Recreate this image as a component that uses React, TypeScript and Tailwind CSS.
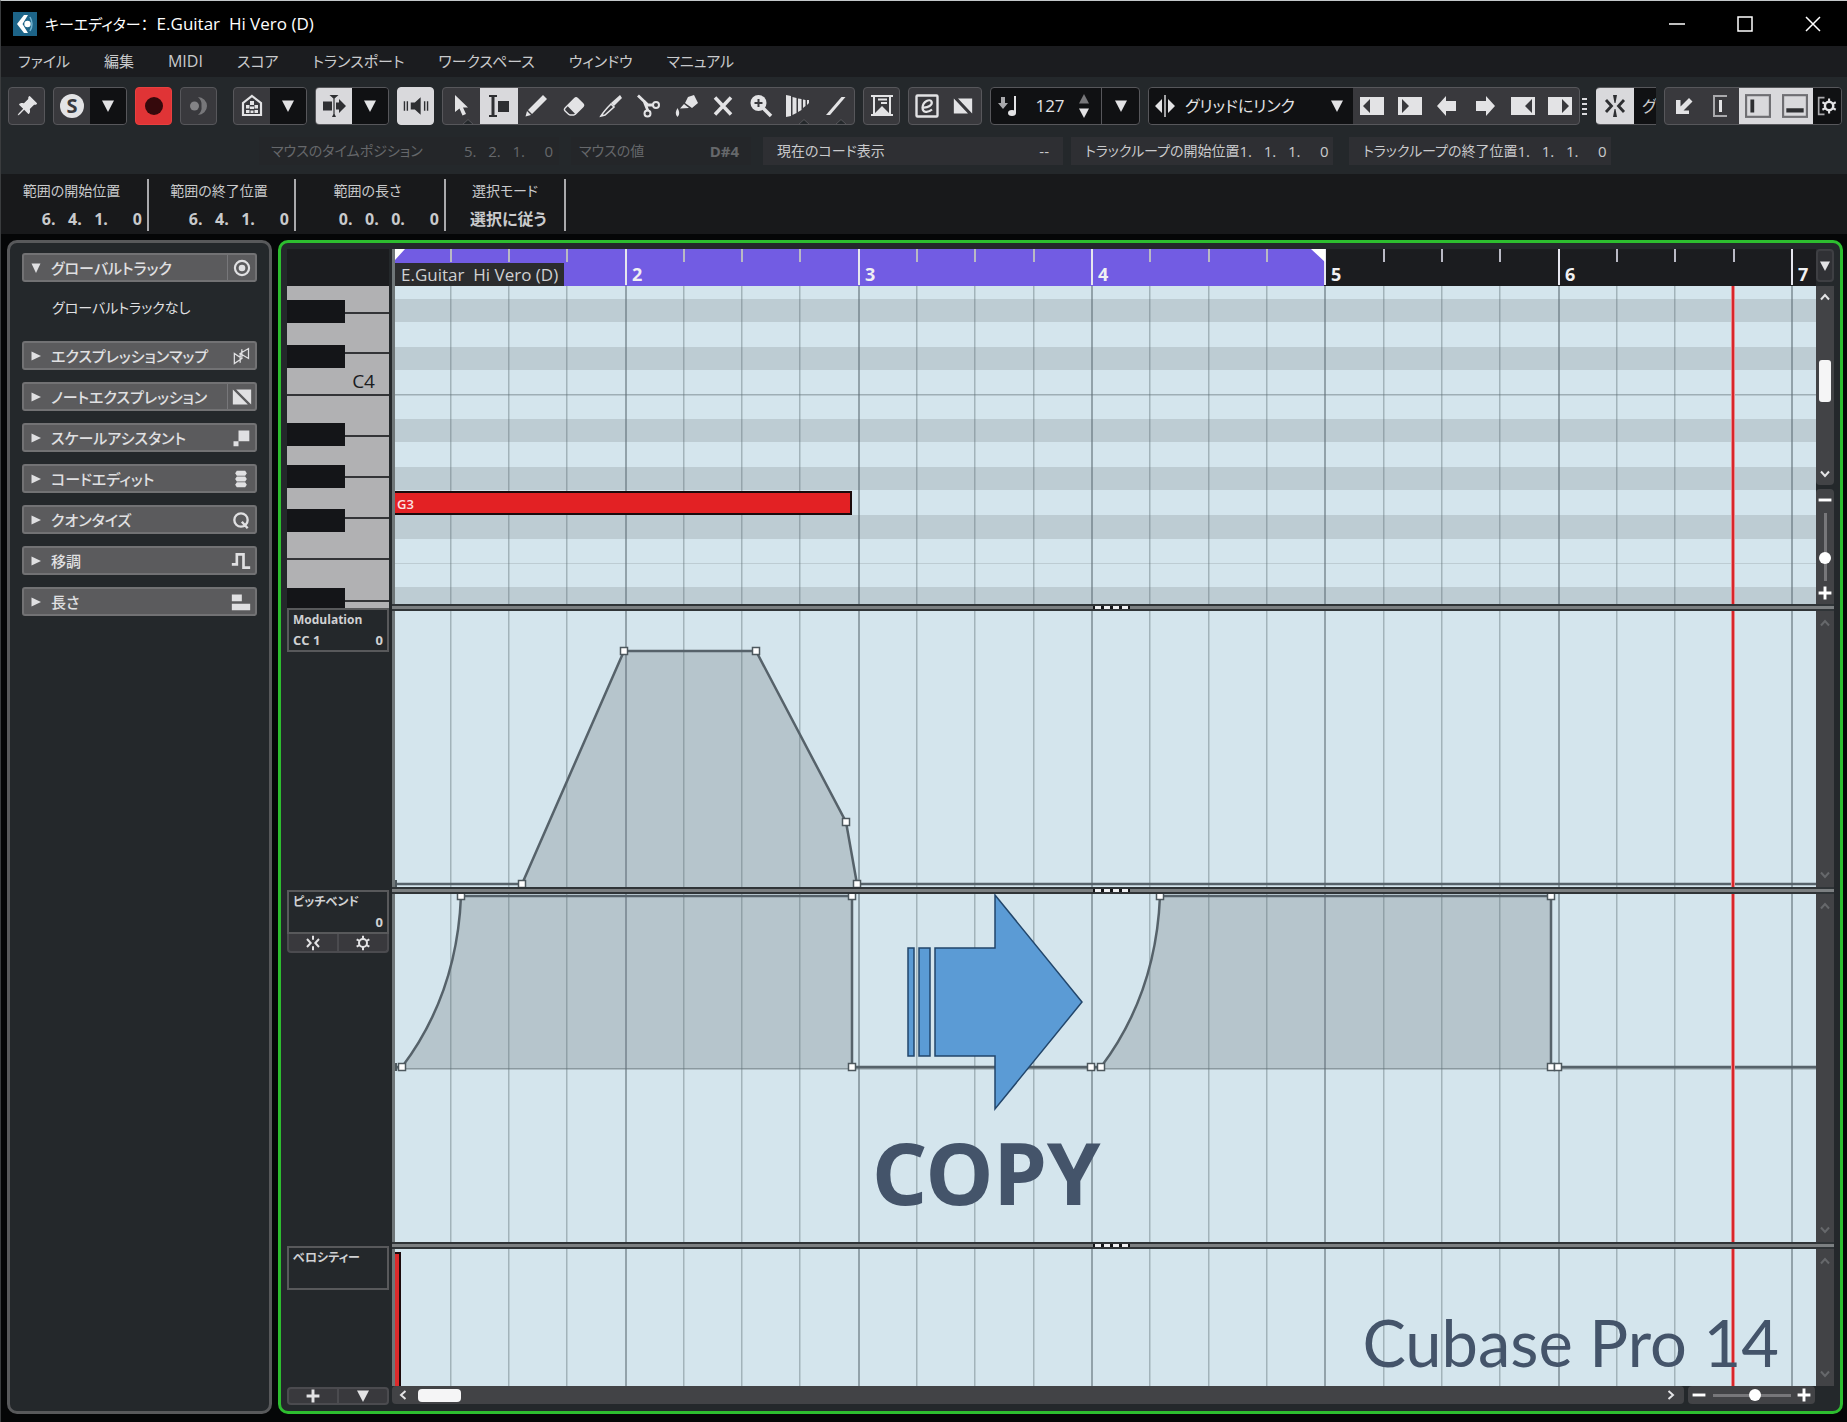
import type { ReactNode } from 'react';
import clsx from 'clsx';
import { BsEraserFill, BsPinAngleFill } from 'react-icons/bs';

const MENU = ['ファイル', '編集', 'MIDI', 'スコア', 'トランスポート', 'ワークスペース', 'ウィンドウ', 'マニュアル'];

// Timeline geometry, in canvas units. One bar is four beats.
const CANVAS_W = 1421;
const BAR_W = 233.3;
const BAR_ONE = -2.8;
const PLAYHEAD = 1338;

const beats = Array.from({ length: 25 }, (_, i) => ({
    x: Math.round(BAR_ONE + (i * BAR_W) / 4),
    isBar: i % 4 === 0,
    bar: i / 4 + 1,
})).filter((b) => b.x > 0);

const Icon = ({ children, size = 'size-6' }: { children: ReactNode; size?: string }) => (
    <svg viewBox="0 0 24 24" className={clsx(size, 'shrink-0')} fill="currentColor" aria-hidden="true">
        {children}
    </svg>
);

const Down = ({ className = 'size-3' }: { className?: string }) => (
    <svg viewBox="0 0 12 12" className={clsx('shrink-0', className)} fill="currentColor" aria-hidden="true">
        <path d="M0 0.5H12L6 12Z" />
    </svg>
);

const Group = ({ children, className }: { children: ReactNode; className?: string }) => (
    <div className={clsx('flex h-[38px] shrink-0 overflow-hidden rounded border', className)}>{children}</div>
);

const PLAIN = 'border-[#57575b] bg-[#39393d]';

type ToolProps = { label: string; on?: boolean; dark?: boolean; notch?: boolean; className?: string; children: ReactNode };

const Tool = ({ label, on, dark, notch, className, children }: ToolProps) => (
    <button
        type="button"
        aria-label={label}
        className={clsx(
            'relative flex min-w-0 flex-1 items-center justify-center',
            on && '-my-px bg-[#d9d9dc] text-[#2e2f32]',
            dark && 'bg-[#101113] text-[#e3e3e5]',
            !on && !dark && 'text-[#e3e3e5]',
            className,
        )}
    >
        {children}
        {notch && (
            <svg viewBox="0 0 12 6" className="absolute -bottom-px left-1/2 h-1.5 w-3" aria-hidden="true">
                <path d="M0 6L6 0.500L12 6Z" fill="#24282b" stroke="#57575b" />
            </svg>
        )}
    </button>
);

const TitleBar = () => (
    <header className="flex h-[45px] items-center bg-black pl-3 text-white">
        <svg viewBox="0 0 24 24" className="size-6" aria-hidden="true">
            <rect width="24" height="24" fill="#1d6488" />
            <path d="M11 3L4 12L11 21H15L9.5 12L15 3Z" fill="#fff" />
            <circle cx="14.5" cy="12" r="3.2" fill="#fff" />
            <path d="M17 5Q21 12 17 19" stroke="#6fb2d0" strokeWidth="1.5" fill="none" />
        </svg>
        <h1 className="ml-2 flex-1 whitespace-pre text-[17px] leading-6">
            <span className="mr-1 text-[15px]">キーエディター：</span> E.Guitar  Hi Vero (D)
        </h1>
        <div className="flex">
            <button type="button" aria-label="最小化" className="flex w-[68px] justify-center">
                <svg viewBox="0 0 16 16" className="size-4" stroke="#fff" strokeWidth="1.500"><path d="M0 8H16" /></svg>
            </button>
            <button type="button" aria-label="最大化" className="flex w-[68px] justify-center">
                <svg viewBox="0 0 16 16" className="size-4" stroke="#fff" strokeWidth="1.500" fill="none"><rect x="1" y="1" width="14" height="14" /></svg>
            </button>
            <button type="button" aria-label="閉じる" className="flex w-[68px] justify-center">
                <svg viewBox="0 0 16 16" className="size-4" stroke="#fff" strokeWidth="1.500"><path d="M1 1L15 15M15 1L1 15" /></svg>
            </button>
        </div>
    </header>
);

const MenuBar = () => (
    <nav className="flex h-[31px] items-center gap-[34px] bg-[#1b1c1f] pb-px pl-[17px] text-[15px] text-[#c9cacc]">
        {MENU.map((item) => (
            <button key={item} type="button" className={clsx('whitespace-nowrap', item === 'MIDI' && 'text-base')}>{item}</button>
        ))}
    </nav>
);

const Toolbar = () => (
    <div className="flex gap-2 overflow-hidden pl-[7px] pt-[10px]">
        <Group className={clsx(PLAIN, 'w-[37px]')}>
            <Tool label="ウィンドウを固定"><BsPinAngleFill className="size-[22px]" /></Tool>
        </Group>
        <Group className={clsx(PLAIN, 'w-[74px]')}>
            <Tool label="ソロ">
                <span className="flex size-6 items-center justify-center rounded-full bg-[#e3e3e5] text-xl font-bold leading-6 text-[#39393d]">S</span>
            </Tool>
            <Tool label="ソロの設定" dark><Down /></Tool>
        </Group>
        <Group className="w-[37px] border-[#e8403f] bg-[#e03436]">
            <Tool label="録音"><span className="size-[18px] rounded-full bg-[#35090c]" /></Tool>
        </Group>
        <Group className={clsx(PLAIN, 'mr-2 w-[37px]')}>
            <Tool label="レトロスペクティブ録音">
                <Icon>
                    <circle cx="7.500" cy="12" r="4.500" fill="#838386" />
                    <path d="M11 3a9 9 0 1 1 0 18a10 10 0 0 0 3.500-9a10 10 0 0 0-3.500-9Z" fill="#77777a" />
                </Icon>
            </Tool>
        </Group>
        <Group className={clsx(PLAIN, 'w-[74px]')}>
            <Tool label="アコースティックフィードバック">
                <Icon>
                    <path d="M12 2L21 9V21H3V9Z" fill="none" stroke="currentColor" strokeWidth="2.200" />
                    <path d="M10 7h4v4h-4zM6 11h3.500v3.500H6zM14.500 11H18v3.500h-3.500zM10 12.500h4V15h-4zM6 16h3.500v3H6zM10.500 16.500h3V19h-3zM14.500 16H18v3h-3.500z" />
                </Icon>
            </Tool>
            <Tool label="フィードバックの設定" dark><Down /></Tool>
        </Group>
        <Group className={clsx(PLAIN, 'w-[74px]')}>
            <Tool label="自動スクロール" on>
                <Icon>
                    <path d="M1 7.500H10V16.500H1ZM14 8.500H17V5L24 12L17 19V15.500H14Z" />
                    <path d="M7.500 1H16.500L12.600 4.500V20L14 23H10L11.400 20V4.500Z" />
                </Icon>
            </Tool>
            <Tool label="自動スクロールの設定" dark><Down /></Tool>
        </Group>
        <Group className="w-[37px] border-[#d9d9dc] bg-[#d9d9dc]">
            <Tool label="試聴" on>
                <Icon size="size-7">
                    <path d="M7.500 9h3.500l5-4.500v15L11 15H7.500zM1.500 8h1.200v8H1.500zM4 8h1.200v8H4zM18.800 8H20v8h-1.200zM21.300 8h1.200v8h-1.200z" />
                </Icon>
            </Tool>
        </Group>
        <Group className={clsx(PLAIN, 'w-[413px]')}>
            <Tool label="オブジェクトの選択" notch><Icon><path d="M5 1V18L9.500 14.500L12.500 21.500L16 20L13 13.500H18Z" /></Icon></Tool>
            <Tool label="範囲選択" on>
                <Icon>
                    <path d="M2 1H10V3H7.500V21H10V23H2V21H4.500V3H2Z" />
                    <path d="M11 7H22V18H11Z" />
                </Icon>
            </Tool>
            <Tool label="鉛筆"><Icon><path d="M19 1L23 5L8 20L4 16ZM3 17L7 21L1.500 22.500Z" /></Icon></Tool>
            <Tool label="消しゴム"><BsEraserFill className="size-[22px]" /></Tool>
            <Tool label="トリム">
                <Icon>
                    <path d="M21 1L23 4L15 12L12 9Z" />
                    <path d="M12 10L15 13L6 21L2 22Q5 17 12 10Z" fill="none" stroke="currentColor" strokeWidth="1.600" />
                </Icon>
            </Tool>
            <Tool label="はさみ">
                <Icon>
                    <path d="M2 1.500L12 11L18 11M8 7L12 17" stroke="currentColor" strokeWidth="2.800" fill="none" />
                    <circle cx="20" cy="11" r="3" fill="none" stroke="currentColor" strokeWidth="2" />
                    <circle cx="11.500" cy="19.500" r="3" fill="none" stroke="currentColor" strokeWidth="2" />
                </Icon>
            </Tool>
            <Tool label="のり">
                <Icon>
                    <path d="M14 3L20 1L24 9L18 14L11 9ZM10 10L15 14L6 14.500Z" />
                    <path d="M3.500 14Q7 20 3.500 23Q0 20 3.500 14Z" />
                </Icon>
            </Tool>
            <Tool label="ミュート"><Icon><path d="M4 3.500L20 20.500M20 3.500L4 20.500" stroke="currentColor" strokeWidth="3.500" /></Icon></Tool>
            <Tool label="ズーム">
                <Icon>
                    <circle cx="9.500" cy="9" r="8" />
                    <path d="M14 14L22 22" stroke="currentColor" strokeWidth="3.500" />
                    <path d="M9.500 5V13M5.500 9H13.500" stroke="#39393d" strokeWidth="2" />
                </Icon>
            </Tool>
            <Tool label="タイムワープ" notch>
                <Icon><path d="M0 1L5 2V22L0 23ZM6.500 3L10.500 4V19L6.500 21ZM12 4.500L15.500 5V16L12 18ZM17 5.500L19.500 6V12L17 14ZM21 6H23V9L21 11Z" /></Icon>
            </Tool>
            <Tool label="ライン" notch><Icon><path d="M3 21L18.500 3H22.500L7 21Z" /></Icon></Tool>
        </Group>
        <Group className={clsx(PLAIN, 'w-[37px]')}>
            <Tool label="コントローラーを自動選択">
                <Icon>
                    <path d="M1 1H7V3H5V19L12 12L19 19V9H21V20H23V22H1V20H3V3H1Z" />
                    <path d="M7 1H23V3H21V9H19V3H7ZM8 4.500H17V6.500H8ZM11 8H17V10H11ZM5 20L12 13L19 20Z" />
                </Icon>
            </Tool>
        </Group>
        <Group className={clsx(PLAIN, 'w-[74px]')}>
            <Tool label="VST表記">
                <Icon>
                    <rect x="1.500" y="1.500" width="21" height="21" rx="1" fill="none" stroke="currentColor" strokeWidth="2.400" />
                    <path d="M7.500 13.500C13 14 18 11 16.500 7.500C15 4.500 8 7 7.500 13.500C7.500 19 13 19 17 15.500" fill="none" stroke="currentColor" strokeWidth="2.200" />
                </Icon>
            </Tool>
            <Tool label="ノートエクスプレッション"><Icon size="size-5"><path d="M1 3V21H18ZM6 3H23V21Z" /></Icon></Tool>
        </Group>
        <Group className="w-[150px] items-center border-[#57575b] bg-[#101113] text-[#e3e3e5]">
            <svg viewBox="0 0 24 24" className="ml-1.5 size-6 shrink-0" fill="currentColor" aria-hidden="true">
                <path d="M4 3H8V9H11L6 15L1 9H4Z" fill="#a9a9ac" />
                <path d="M17 2H19V19H17Z" />
                <ellipse cx="15" cy="19" rx="4" ry="3" />
            </svg>
            <input aria-label="挿入ベロシティー" defaultValue="127" className="min-w-0 flex-1 bg-transparent text-center text-[17px]" />
            <div className="flex flex-col gap-1 pr-3">
                <button type="button" aria-label="上げる"><Down className="size-2.5 rotate-180 text-[#77777a]" /></button>
                <button type="button" aria-label="下げる"><Down className="size-2.5" /></button>
            </div>
            <button type="button" aria-label="ベロシティーの設定" className="flex h-full w-[38px] items-center justify-center border-l border-[#57575b]"><Down /></button>
        </Group>
        <div className="flex shrink-0 items-center">
            <Group className={clsx(PLAIN, 'w-[432px]')}>
                <label className="relative flex w-[204px] items-center bg-[#101113] pl-1 text-[#e3e3e5]">
                    <Icon><path d="M9 5V19L2 12ZM15 5V19L22 12ZM11.300 1H12.700V23H11.300Z" /></Icon>
                    <select aria-label="ナッジ設定" className="ml-2 h-full flex-1 appearance-none bg-transparent text-base">
                        <option>グリッドにリンク</option>
                    </select>
                    <Down className="pointer-events-none absolute right-2.5 size-3" />
                </label>
                <Tool label="開始位置を左へ"><Icon><path d="M0 3H24V21H0ZM10 5L3 12L10 19Z" fillRule="evenodd" /></Icon></Tool>
                <Tool label="開始位置を右へ"><Icon><path d="M0 3H24V21H0ZM4 5L11 12L4 19Z" fillRule="evenodd" /></Icon></Tool>
                <Tool label="左へ移動"><Icon><path d="M11 2V7H21V17H11V22L2 12Z" /></Icon></Tool>
                <Tool label="右へ移動"><Icon><path d="M13 2V7H3V17H13V22L22 12Z" /></Icon></Tool>
                <Tool label="終了位置を左へ"><Icon><path d="M0 3H24V21H0ZM21 5L14 12L21 19Z" fillRule="evenodd" /></Icon></Tool>
                <Tool label="終了位置を右へ"><Icon><path d="M0 3H24V21H0ZM14 5L21 12L14 19Z" fillRule="evenodd" /></Icon></Tool>
            </Group>
            <svg viewBox="0 0 8 20" className="h-5 w-2" fill="#d9d9dc" aria-hidden="true">
                <path d="M2 2H7V4H2ZM2 7H7V9H2ZM2 12H7V14H2ZM2 17H7V19H2Z" />
            </svg>
        </div>
        <div className="flex h-[38px] w-[60px] shrink-0 overflow-hidden rounded-l border-y border-[#57575b]">
            <Tool label="スナップ" on className="min-w-[38px]">
                <Icon>
                    <path d="M3 6L8.500 12L3 18M21 6L15.500 12L21 18" stroke="currentColor" strokeWidth="2.800" fill="none" />
                    <path d="M10 1H14L12.500 9H11.500ZM11.500 15H12.500L14 23H10Z" />
                </Icon>
            </Tool>
            <span className="w-[22px] shrink-0 overflow-hidden bg-[#101113] pl-2 text-base leading-[36px] text-[#c9cacc]">グ</span>
        </div>
        <Group className={clsx(PLAIN, 'w-[178px]')}>
            <Tool label="エディターを下ゾーンに開く"><Icon><path d="M17 4L20.500 7.500L11.500 16.500H17V20H4V6H8.500V12.500Z" /></Icon></Tool>
            <Tool label="左ゾーン">
                <Icon><path d="M18 2H5V22H18" fill="none" stroke="#a9a9ac" strokeWidth="2" /><path d="M10 6H13V18H10Z" /></Icon>
            </Tool>
            <Tool label="インスペクター" on>
                <Icon size="size-[26px]"><rect x="1" y="2" width="22" height="20" fill="none" stroke="#6f6f73" strokeWidth="2" /><path d="M5 6H8.500V18H5Z" /></Icon>
            </Tool>
            <Tool label="情報ライン" on>
                <Icon size="size-[26px]"><rect x="1" y="2" width="22" height="20" fill="none" stroke="#6f6f73" strokeWidth="2" /><path d="M4 14H20V18H4Z" /></Icon>
            </Tool>
            <Tool label="ツールバーの設定" dark className="max-w-[28px]">
                <Icon size="size-5">
                    <path d="M9 2H2V22H9" fill="none" stroke="#a9a9ac" strokeWidth="2" />
                    <circle cx="14.500" cy="12" r="5" fill="none" stroke="currentColor" strokeWidth="3" />
                    <path d="M14.500 3V7M14.500 17V21M6.500 7.500L10 9.500M22.500 7.500L19 9.500M6.500 16.500L10 14.500M22.500 16.500L19 14.500" stroke="currentColor" strokeWidth="2.500" />
                </Icon>
            </Tool>
        </Group>
    </div>
);

type FieldProps = { label: string; value: string; dim?: boolean; bold?: boolean; className: string };

const StatusField = ({ label, value, dim, bold, className }: FieldProps) => (
    <div
        className={clsx(
            'flex h-7 shrink-0 items-center justify-between whitespace-pre',
            dim ? 'bg-[#242629] text-[#66686b]' : 'bg-[#2e2f33] text-[#c9cacc]',
            className,
        )}
    >
        <span className="text-sm">{label}</span>
        <span className={clsx('text-[15px]', bold && 'font-bold')}>{value}</span>
    </div>
);

const StatusLine = () => (
    <div className="flex overflow-hidden pl-[258px] pt-3 pb-[9px]">
        <StatusField label="マウスのタイムポジション" value="5.   2.   1.     0" dim className="w-[300px] pl-3 pr-1.5" />
        <StatusField label="マウスの値" value="D#4" dim bold className="ml-3 w-[180px] pl-2 pr-3" />
        <StatusField label="現在のコード表示" value="--" className="ml-3 w-[300px] px-[14px]" />
        <StatusField label="トラックループの開始位置" value="1.   1.   1.     0" className="ml-2 w-[262px] pl-[14px] pr-1.5" />
        <StatusField label="トラックループの終了位置" value="1.   1.   1.     0" className="ml-4 w-[262px] pl-[14px] pr-1.5" />
    </div>
);

const InfoItem = ({ label, value, className }: { label: string; value: string; className: string }) => (
    <div className={clsx('flex h-[52px] flex-col justify-between whitespace-pre border-r-2 border-[#a9a9ac] text-[#c9cacc]', className)}>
        <span className="text-center text-sm leading-6">{label}</span>
        <span className="text-right text-base font-bold leading-6">{value}</span>
    </div>
);

const InfoLine = () => (
    <div className="flex h-[60px] bg-[#18191b] pt-[5px]">
        <InfoItem label="範囲の開始位置" value="6.   4.   1.      0" className="w-[148px] pr-[5px]" />
        <InfoItem label="範囲の終了位置" value="6.   4.   1.      0" className="w-[147px] pr-[5px]" />
        <InfoItem label="範囲の長さ" value="0.   0.   0.      0" className="w-[150px] pr-[5px]" />
        <InfoItem label="選択モード" value="選択に従う" className="w-[120px] px-6" />
    </div>
);

const SECTIONS = [
    {
        title: 'エクスプレッションマップ',
        icon: <path d="M4 9V21L13 15ZM21 3V15L11 9ZM11 9V20M13 4V15" fill="none" stroke="currentColor" strokeWidth="1.500" />,
    },
    { title: 'ノートエクスプレッション', split: true, icon: <path d="M1 3V21H19ZM5 3H23V21Z" /> },
    { title: 'スケールアシスタント', icon: <path d="M9 3H22V16H9ZM3 16H9V22H3Z" /> },
    { title: 'コードエディット', icon: <path d="M7 2H17L19 5L17 8H7L5 5ZM7 9H17L19 12L17 15H7L5 12ZM7 16H17L19 19L17 22H7L5 19Z" /> },
    {
        title: 'クオンタイズ',
        icon: <path d="M12 4A8 8 0 1 0 12 20A8 8 0 1 0 12 4M13 14L20 22" fill="none" stroke="currentColor" strokeWidth="2.800" />,
    },
    { title: '移調', icon: <path d="M1 16H7V4H15V20H23" fill="none" stroke="currentColor" strokeWidth="3.200" /> },
    { title: '長さ', icon: <path d="M1 3H13V11H1ZM1 14H23V22H1Z" /> },
];

const SectionHeader = ({ title, open, split, icon }: { title: string; open?: boolean; split?: boolean; icon: ReactNode }) => (
    <button
        type="button"
        aria-expanded={!!open}
        className="flex h-[29px] w-full items-center rounded-[3px] border-2 border-[#727274] bg-[#5b5b5d] text-[#e0e0e2]"
    >
        <svg viewBox="0 0 10 10" className={clsx('mx-[7px] size-2.5', open && 'rotate-90')} fill="currentColor" aria-hidden="true">
            <path d="M0.500 0.500L10 5L0.500 9.500Z" />
        </svg>
        <span className="ml-[3px] flex-1 whitespace-nowrap text-left text-[15px] font-medium leading-6">{title}</span>
        <span className={clsx('flex h-full w-7 items-center justify-center', split && 'border-l border-[#77777a]')}>
            <Icon size="size-5">{icon}</Icon>
        </span>
    </button>
);

const Inspector = () => (
    <aside className="w-[265px] shrink-0 rounded-[10px] border-[3px] border-[#58595b] bg-[#24282b] px-3 pt-[10px]">
        <SectionHeader
            title="グローバルトラック"
            open
            split
            icon={
                <>
                    <circle cx="12" cy="12" r="8.500" fill="none" stroke="currentColor" strokeWidth="2.600" />
                    <circle cx="12" cy="12" r="4" />
                </>
            }
        />
        <p className="pl-[30px] pt-[14px] pb-[21px] text-sm leading-6 text-[#e0e0e2]">グローバルトラックなし</p>
        <div className="flex flex-col gap-3">
            {SECTIONS.map((s) => (
                <SectionHeader key={s.title} {...s} />
            ))}
        </div>
    </aside>
);

// top edges of the keys, measured from the top of the keyboard
const BLACK_KEYS = [14, 59, 137, 179, 223, 302];
const KEY_GAPS = [27, 67, 109, 150, 191, 232, 273, 315];

const Keyboard = () => (
    <div className="relative h-[322px] overflow-hidden bg-[#b1b1b3]">
        <svg viewBox="0 0 102 322" preserveAspectRatio="none" className="block h-full w-full" aria-hidden="true">
            {KEY_GAPS.map((y) => (
                <rect key={y} x="0" y={y - 1} width="102" height="2" fill="#333437" />
            ))}
            {BLACK_KEYS.map((y) => (
                <rect key={y} x="0" y={y} width="58" height="23" fill="#141518" />
            ))}
        </svg>
        <span className="absolute right-[14px] top-[83px] text-[19px] leading-6 text-[#1b1c1f]">C4</span>
    </div>
);

const LaneBox = ({ name, sub, value }: { name: string; sub?: string; value?: string }) => (
    <div className="h-11 border-2 border-[#58595b] px-1 text-xs font-bold leading-5 text-[#d0d1d3]">
        <div className="h-5">{name}</div>
        <div className="flex justify-between text-[13px]">
            <span>{sub}</span>
            <span>{value}</span>
        </div>
    </div>
);

const LaneHeaders = () => (
    <div className="flex w-[102px] shrink-0 flex-col">
        <div className="h-[37px] bg-[#1b1c1f]" />
        <Keyboard />
        <div className="h-[282px]">
            <LaneBox name="Modulation" sub="CC 1" value="0" />
        </div>
        <div className="h-[356px]">
            <LaneBox name="ピッチベンド" value="0" />
            <div className="flex h-[19px] rounded-b border-2 border-t-0 border-[#4b4b4f] bg-[#39393d]">
                <Tool label="セミトーンにスナップ">
                    <Icon size="size-4">
                        <path d="M3 6L8.500 12L3 18M21 6L15.500 12L21 18M12 1V7M12 17V23" stroke="currentColor" strokeWidth="3" fill="none" />
                    </Icon>
                </Tool>
                <Tool label="レーンの設定" className="border-l-2 border-[#4b4b4f]">
                    <Icon size="size-4">
                        <circle cx="12" cy="12" r="6" fill="none" stroke="currentColor" strokeWidth="3" />
                        <path d="M12 1V6M12 18V23M2.500 6.500L7 9M21.500 6.500L17 9M2.500 17.500L7 15M21.500 17.500L17 15" stroke="currentColor" strokeWidth="3" />
                    </Icon>
                </Tool>
            </div>
        </div>
        <div className="h-[141px] shrink-0">
            <LaneBox name="ベロシティー" />
        </div>
        <div className="flex h-[18px] rounded-sm border-2 border-[#4b4b4f] bg-[#39393d]">
            <Tool label="レーンを追加"><Icon size="size-3.5"><path d="M9.500 1H14.500V9.500H23V14.500H14.500V23H9.500V14.500H1V9.500H9.500Z" /></Icon></Tool>
            <Tool label="レーンの設定" className="border-l-2 border-[#4b4b4f]"><Down /></Tool>
        </div>
    </div>
);

const Ruler = () => (
    <div className="flex h-[37px]">
        <div className="relative min-w-0 flex-1 overflow-hidden border-l-[3px] border-[#6f7678] bg-[#1b1c1f]">
            <svg viewBox="0 0 1421 37" preserveAspectRatio="none" className="block h-full w-full" aria-hidden="true">
                <rect width="929" height="37" fill="#725ce3" />
                {beats.map((b) => (
                    <rect key={b.x} x={b.x - 1} width="2" height={b.isBar ? 36 : 13} fill={b.isBar ? '#e6e6ee' : '#b9b9c4'} />
                ))}
                <path d="M0 0H10L0 11ZM916 0H930V13Z" fill="#fff" />
            </svg>
            <span className="absolute bottom-0 left-0 flex h-[23px] items-center whitespace-pre bg-[#2b2c2e] px-1.5 text-[17px] text-[#d0d1d3]">
                E.Guitar  Hi Vero (D)
            </span>
            {beats.filter((b) => b.isBar).map((b) => (
                <span
                    key={b.bar}
                    className="absolute bottom-0 pl-1.5 text-lg font-bold leading-6 text-[#f0f0f2]"
                    style={{ left: `${(b.x / CANVAS_W) * 100}%` }}
                >
                    {b.bar}
                </span>
            ))}
        </div>
        <button type="button" aria-label="ルーラーの設定" className="mb-1 flex w-[18px] items-center justify-center rounded border-2 border-[#3e3f43] bg-[#303135] text-[#e3e3e5]">
            <Down className="size-2.5" />
        </button>
    </div>
);

const Chevron = ({ dir, dim }: { dir: 'up' | 'down' | 'left' | 'right'; dim?: boolean }) => (
    <svg
        viewBox="0 0 10 10"
        className={clsx('size-2.5', dir === 'down' && 'rotate-180', dir === 'left' && '-rotate-90', dir === 'right' && 'rotate-90', dim ? 'text-[#66686b]' : 'text-[#e3e3e5]')}
        fill="none"
        stroke="currentColor"
        strokeWidth="2"
        aria-hidden="true"
    >
        <path d="M1 7.500L5 3L9 7.500" />
    </svg>
);

const LaneScroll = () => (
    <div className="flex w-[18px] flex-col items-center justify-between bg-[#424346] py-[7px]">
        <Chevron dir="up" dim />
        <Chevron dir="down" dim />
    </div>
);

const Splitter = () => (
    <div className="flex h-[7px] items-center justify-center border-y-2 border-[#2f3437] bg-[#7b7f81] pr-1">
        <div className="flex h-[3px] gap-[3px] bg-[#141518] px-0.5">
            {[0, 1, 2, 3].map((i) => (
                <span key={i} className="w-1.5 bg-[#f0f0f2]" />
            ))}
        </div>
    </div>
);

const GridLines = ({ height }: { height: number }) => (
    <>
        {beats.map((b) => (
            <rect key={b.x} x={b.x - 1} width={b.isBar ? 2 : 1.5} height={height} fill="#5e6d75" fillOpacity={b.isBar ? 0.56 : 0.42} />
        ))}
    </>
);

const Playhead = ({ height }: { height: number }) => (
    <>
        <rect x={PLAYHEAD - 2} width="4" height={height} fill="#e58d90" />
        <rect x={PLAYHEAD - 1} width="2" height={height} fill="#d9252a" />
    </>
);

const Handles = ({ points }: { points: number[][] }) => (
    <>
        {points.map(([x, y]) => (
            <rect key={`${x}-${y}`} x={x - 3.5} y={y - 3.5} width="7" height="7" fill="#fff" stroke="#4d585e" strokeWidth="1.500" />
        ))}
    </>
);

const BLACK_ROWS = [[13, 23], [61, 23], [133, 23], [181, 23], [229, 24], [301, 17]];

const NoteLane = () => (
    <div className="flex h-[318px]">
        <div className="relative min-w-0 flex-1 border-l-[3px] border-[#6f7678]">
            <svg viewBox="0 0 1421 318" preserveAspectRatio="none" className="block h-full w-full" aria-hidden="true">
                <rect width="1421" height="318" fill="#d4e5ed" />
                {BLACK_ROWS.map(([y, h]) => (
                    <rect key={y} y={y} width="1421" height={h} fill="#bdccd3" />
                ))}
                <rect y="108" width="1421" height="1.500" fill="#9eaeb5" />
                <rect y="277" width="1421" height="1" fill="#bdccd3" />
                <GridLines height={318} />
                <rect x="-2" y="206" width="458" height="22" fill="#e32124" stroke="#1b0a0c" strokeWidth="2" />
                <Playhead height={318} />
            </svg>
            <span className="absolute left-0.5 top-[208px] text-[13px] font-semibold leading-5 text-[#fbe3e3]">G3</span>
        </div>
        <div className="flex w-[18px] flex-col gap-1">
            <div className="relative flex h-[199px] flex-col items-center justify-between rounded-b bg-[#424346] py-1.5">
                <Chevron dir="up" />
                <span className="absolute top-[74px] h-[42px] w-3 rounded-[3px] bg-[#f5f5f6]" />
                <Chevron dir="down" />
            </div>
            <div className="flex flex-1 flex-col items-center justify-between rounded-t bg-[#424346] pt-1 pb-1 text-white">
                <button type="button" aria-label="垂直に縮小"><Icon size="size-3.5"><path d="M1 9.500H23V14.500H1Z" /></Icon></button>
                <input
                    type="range"
                    aria-label="垂直ズーム"
                    defaultValue={70}
                    className="h-[68px] w-[3px] appearance-none bg-[#77777a] [writing-mode:vertical-lr] [&::-webkit-slider-thumb]:size-3 [&::-webkit-slider-thumb]:appearance-none [&::-webkit-slider-thumb]:rounded-full [&::-webkit-slider-thumb]:bg-white"
                />
                <button type="button" aria-label="垂直に拡大"><Icon size="size-3.5"><path d="M9.500 1H14.500V9.500H23V14.500H14.500V23H9.500V14.500H1V9.500H9.500Z" /></Icon></button>
            </div>
        </div>
    </div>
);

const MOD_POINTS = [[127, 273], [229, 40], [361, 40], [451, 211], [462, 273]];

const ModulationLane = () => (
    <div className="flex h-[276px]">
        <div className="min-w-0 flex-1 border-l-[3px] border-[#6f7678]">
            <svg viewBox="0 0 1421 276" preserveAspectRatio="none" className="block h-full w-full" aria-hidden="true">
                <rect width="1421" height="276" fill="#d4e5ed" />
                <path d="M127 276V273L229 40H361L451 211L462 273V276Z" fill="#b6c5cc" />
                <GridLines height={276} />
                <path d="M0 273H127L229 40H361L451 211L462 273H1421" fill="none" stroke="#56626a" strokeWidth="2.500" />
                <rect y="269" width="2" height="7" fill="#4d585e" />
                <Handles points={MOD_POINTS} />
                <Playhead height={276} />
            </svg>
        </div>
        <LaneScroll />
    </div>
);

const BEND_POINTS = [[7, 173], [66, 2], [457, 2], [457, 173], [696, 173], [706, 173], [765, 2], [1156, 2], [1156, 173], [1163, 173]];

const PitchBendLane = () => (
    <div className="flex h-[348px]">
        <div className="relative min-w-0 flex-1 border-l-[3px] border-[#6f7678]">
            <svg viewBox="0 0 1421 348" preserveAspectRatio="none" className="block h-full w-full" aria-hidden="true">
                <rect width="1421" height="348" fill="#d4e5ed" />
                <path d="M7 175Q62 100 66 2H457V175ZM706 175Q761 100 765 2H1156V175Z" fill="#b6c5cc" />
                <rect y="174" width="1421" height="1.500" fill="#8b999f" />
                <GridLines height={348} />
                <path
                    d="M0 173H7Q62 100 66 2H457V173H706Q761 100 765 2H1156V173H1421"
                    fill="none"
                    stroke="#56626a"
                    strokeWidth="2.500"
                />
                <rect y="169" width="2" height="8" fill="#4d585e" />
                <Handles points={BEND_POINTS} />
                <g fill="#5b9bd5" stroke="#22466b" strokeWidth="1.500">
                    <path d="M513 54H519V162H513ZM524 54H535V162H524Z" />
                    <path d="M540 54H600V1L687 108L600 215V162H540Z" />
                </g>
                <Playhead height={348} />
            </svg>
            <span className="absolute left-[33%] top-[235px] ml-2 text-[86px] font-bold leading-[86px] text-[#44546a] [font-family:'Noto_Sans',sans-serif]">
                COPY
            </span>
        </div>
        <LaneScroll />
    </div>
);

const VelocityLane = () => (
    <div className="flex h-[137px]">
        <div className="relative min-w-0 flex-1 border-l-[3px] border-[#6f7678]">
            <svg viewBox="0 0 1421 137" preserveAspectRatio="none" className="block h-full w-full" aria-hidden="true">
                <rect width="1421" height="137" fill="#d4e5ed" />
                <GridLines height={137} />
                <rect x="-2" y="4" width="7" height="140" fill="#dc2a2c" stroke="#1b0a0c" strokeWidth="2" />
                <Playhead height={137} />
            </svg>
            <span className="absolute bottom-2 right-[37px] whitespace-nowrap text-[65px] leading-[72px] text-[#44546a] [font-family:Lato,sans-serif]">
                Cubase Pro 14
            </span>
        </div>
        <LaneScroll />
    </div>
);

const HorizontalScroll = () => (
    <div className="flex h-[18px] gap-1 pr-[19px]">
        <div className="flex flex-1 items-center rounded bg-[#424346] pl-1.5 pr-2">
            <Chevron dir="left" />
            <span className="ml-2.5 h-[13px] w-[43px] rounded bg-[#f5f5f6]" />
            <span className="flex-1" />
            <Chevron dir="right" />
        </div>
        <div className="flex w-[127px] items-center justify-between rounded bg-[#424346] px-1 text-white">
            <button type="button" aria-label="水平に縮小"><Icon size="size-3.5"><path d="M1 9.500H23V14.500H1Z" /></Icon></button>
            <input
                type="range"
                aria-label="水平ズーム"
                defaultValue={56}
                className="h-[3px] w-[78px] appearance-none bg-[#77777a] [&::-webkit-slider-thumb]:size-3 [&::-webkit-slider-thumb]:appearance-none [&::-webkit-slider-thumb]:rounded-full [&::-webkit-slider-thumb]:bg-white"
            />
            <button type="button" aria-label="水平に拡大"><Icon size="size-3.5"><path d="M9.500 1H14.500V9.500H23V14.500H14.500V23H9.500V14.500H1V9.500H9.500Z" /></Icon></button>
        </div>
    </div>
);

const Editor = () => (
    <main className="flex min-w-0 flex-1 gap-[3px] rounded-[10px] border-[3px] border-[#2dbd2f] bg-[#24282b] p-1.5">
        <LaneHeaders />
        <div className="min-w-0 flex-1">
            <Ruler />
            <NoteLane />
            <Splitter />
            <ModulationLane />
            <Splitter />
            <PitchBendLane />
            <Splitter />
            <VelocityLane />
            <HorizontalScroll />
        </div>
    </main>
);

export default function App() {
    return (
        <div className="flex min-h-screen flex-col border-l border-t border-[#c4c8ca] border-l-[#3a3c3e] bg-[#050607] [font-family:'Open_Sans','Noto_Sans_CJK_JP',sans-serif] [font-feature-settings:'palt']">
            <TitleBar />
            <MenuBar />
            <div className="bg-[#24282b]">
                <Toolbar />
                <StatusLine />
            </div>
            <InfoLine />
            <div className="flex flex-1 gap-1.5 pb-[9px] pl-1.5 pr-1 pt-1.5">
                <Inspector />
                <Editor />
            </div>
        </div>
    );
}
